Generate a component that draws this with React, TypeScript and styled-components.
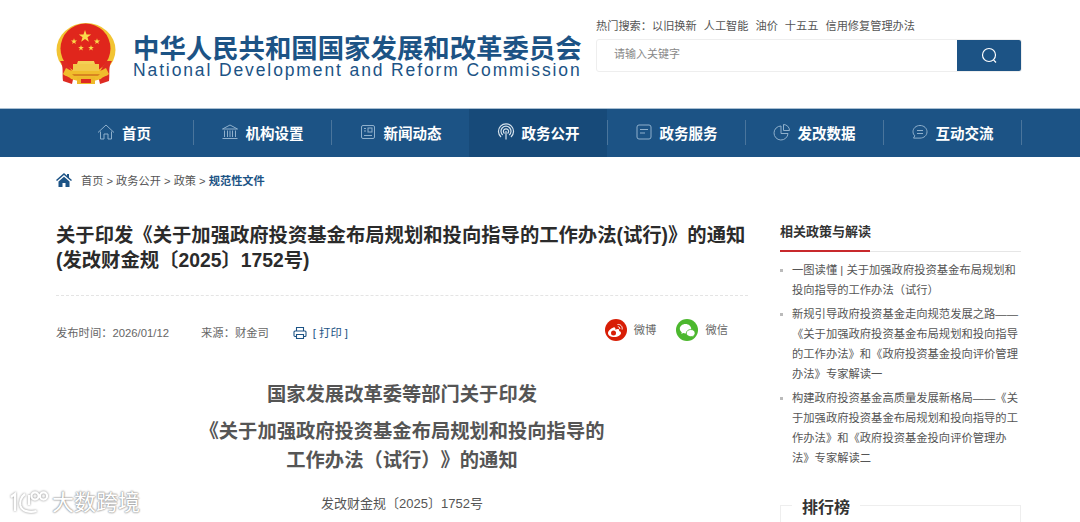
import styled, { createGlobalStyle } from "styled-components";
import type { ReactNode } from "react";

const FONT = `"Liberation Sans", "Noto Sans CJK SC", sans-serif`;
const BLUE = "#1c5385";

const Global = createGlobalStyle`
  html, body {
    margin: 0;
    background: #fff;
    height: 522px;
    overflow: hidden;
  }
  body {
    font-family: ${FONT};
    text-spacing-trim: space-all;
  }
  * { box-sizing: border-box; }
`;

const Page = styled.div`
  position: relative;
  width: 1080px;
  height: 522px;
  overflow: hidden;
`;

const Header = styled.header`
  height: 108px;
  padding: 17px 58px 0 56px;
  display: flex;
  justify-content: space-between;
`;

const Brand = styled.div`
  display: flex;
  align-items: flex-start;
  padding-top: 6px;
`;

const BrandText = styled.div`
  margin-left: 17px;
  padding-top: 13px;
  width: 450px;
  color: ${BLUE};
`;

const BrandCn = styled.div`
  font-size: 26.4px;
  line-height: 26px;
  font-weight: 700;
  white-space: nowrap;
`;

const BrandEn = styled.div`
  font-size: 17.5px;
  line-height: 16px;
  letter-spacing: 1.88px;
  white-space: nowrap;
`;

const SearchArea = styled.div`
  width: 426px;
`;

const HotWords = styled.div`
  display: flex;
  gap: 7px;
  font-size: 11.2px;
  line-height: 18px;
  color: #555;
`;

const SearchBox = styled.div`
  margin-top: 4px;
  height: 33px;
  display: flex;
  border: 1px solid #eee;
  border-radius: 3px;
  overflow: hidden;
`;

const SearchInput = styled.div`
  flex: 1;
  padding-left: 17px;
  font-size: 11px;
  line-height: 29px;
  color: #888;
`;

const SearchButton = styled.div`
  width: 64px;
  background: ${BLUE};
  display: flex;
  align-items: center;
  justify-content: center;
`;

const Nav = styled.nav`
  height: 49px;
  padding-left: 55px;
  display: flex;
  background: ${BLUE};
  border-top: 1px solid #a9bfd2;
`;

const NavItem = styled.div<{ $active?: boolean }>`
  position: relative;
  width: 138px;
  padding-bottom: 2px;
  display: flex;
  align-items: center;
  justify-content: center;
  gap: 7px;
  font-size: 14.5px;
  font-weight: 700;
  color: #fff;
  background: ${(p) => (p.$active ? "#174a79" : "transparent")};
  &::after {
    content: "";
    position: absolute;
    right: -1px;
    top: 11px;
    bottom: 12px;
    width: 1px;
    background: #4a759c;
  }
`;

const Crumbs = styled.div`
  height: 49px;
  padding: 16px 0 0 56px;
  display: flex;
  align-items: flex-start;
  font-size: 11.2px;
  line-height: 16px;
  color: #555;
  white-space: pre;
`;

const CrumbCurrent = styled.span`
  color: ${BLUE};
  font-weight: 700;
`;

const HomeIcon = styled.span`
  margin-right: 9px;
  display: flex;
`;

const Main = styled.main`
  padding: 0 59px 0 56px;
  display: flex;
  justify-content: space-between;
`;

const Article = styled.article`
  width: 692px;
`;

const Title = styled.h1`
  margin: 17px 0 0;
  height: 73px;
  font-size: 19.33px;
  line-height: 25px;
  font-weight: 700;
  color: #2b2b2b;
  border-bottom: 1px dashed #e4e4e4;
  white-space: nowrap;
`;

const Meta = styled.div`
  height: 84px;
  padding-top: 23px;
  display: flex;
  align-items: flex-start;
  font-size: 11.3px;
  line-height: 28px;
  color: #666;
`;

const MetaSource = styled.span`
  margin-left: 32px;
`;

const PrintLink = styled.span`
  margin-left: 24px;
  display: flex;
  align-items: center;
  gap: 6px;
  color: ${BLUE};
  height: 28px;
`;

const Share = styled.div`
  margin-left: auto;
  margin-right: 20px;
  margin-top: -3px;
  display: flex;
  gap: 20px;
`;

const ShareItem = styled.div`
  display: flex;
  align-items: center;
  gap: 7px;
  height: 28px;
`;

const Round = styled.span<{ $bg: string }>`
  width: 22px;
  height: 22px;
  border-radius: 50%;
  background: ${(p) => p.$bg};
  display: flex;
  align-items: center;
  justify-content: center;
`;

const DocHead = styled.h2`
  margin: 0;
  text-align: center;
  font-size: 19.3px;
  line-height: 29px;
  font-weight: 700;
  color: #555;
`;

const DocHeadGap = styled.div`
  height: 8px;
`;

const DocNo = styled.div`
  margin-top: 19px;
  text-align: center;
  font-size: 13px;
  line-height: 20px;
  color: #555;
`;

const Aside = styled.aside`
  width: 241px;
  padding-top: 17px;
`;

const AsideHead = styled.div`
  height: 29px;
  border-bottom: 1px solid #e6e6e6;
  position: relative;
  font-size: 13px;
  line-height: 18px;
  font-weight: 700;
  color: #333;
  &::after {
    content: "";
    position: absolute;
    left: 0;
    bottom: -1px;
    width: 90px;
    height: 2px;
    background: #c8292c;
  }
`;

const LinkList = styled.ul`
  list-style: none;
  margin: 8px 0 0;
  padding: 0;
`;

const LinkItem = styled.li`
  position: relative;
  padding-left: 12px;
  margin-bottom: 4px;
  font-size: 11.3px;
  line-height: 20px;
  color: #555;
  &::before {
    content: "";
    position: absolute;
    left: 0;
    top: 9px;
    width: 3px;
    height: 3px;
    background: #bbb;
  }
`;

const RankBox = styled.div`
  position: relative;
  margin-top: 37px;
  height: 40px;
  border: 1px solid #eee;
`;

const RankTitle = styled.div`
  position: absolute;
  left: 11px;
  top: -9px;
  padding: 0 10px;
  background: #fff;
  font-size: 16px;
  line-height: 22px;
  font-weight: 700;
  color: #333;
`;

const Watermark = styled.div`
  position: absolute;
  left: 9px;
  top: 488px;
  display: flex;
  align-items: flex-start;
  gap: 2px;
`;

const WatermarkLogo = styled.svg`
  filter: drop-shadow(0 0 1px #888);
`;

const WatermarkText = styled.span`
  font-size: 22px;
  line-height: 30px;
  color: #fff;
  text-shadow: 0 0 2px #999, 0 0 2px #999, 0 0 1px #aaa;
`;

const navIcon = (children: ReactNode) => (
  <svg width="18" height="18" viewBox="0 0 18 18" fill="none" stroke="#8fb0cc" strokeWidth="1">
    {children}
  </svg>
);

const navItems: { label: string; icon: ReactNode; active?: boolean }[] = [
  {
    label: "首页",
    icon: navIcon(
      <>
        <path d="M1 9.500 9 2l8 7.500" />
        <path d="M3.500 8.500V16h3.500v-5h4v5h3.500V8.500" />
      </>
    ),
  },
  {
    label: "机构设置",
    icon: navIcon(
      <>
        <path d="M1.500 6 9 2l7.500 4Z" />
        <path d="M3.500 7.500V14M6.500 7.500V14M9 7.500V14M11.500 7.500V14M14.500 7.500V14" />
        <path d="M1.500 15.500h15" />
      </>
    ),
  },
  {
    label: "新闻动态",
    icon: navIcon(
      <>
        <rect x="2.500" y="2.500" width="13" height="13" rx="1.500" />
        <rect x="9" y="5" width="4" height="4" />
        <path d="M5 5.500h2M5 8h2M5 12.500h8" />
      </>
    ),
  },
  {
    label: "政务公开",
    active: true,
    icon: (
      <svg width="18" height="18" viewBox="0 0 18 18" fill="none" stroke="#d6e2ec" strokeWidth="1.200">
        <path d="M4 14a7.500 7.500 0 1 1 10 0" />
        <path d="M5.800 12a5 5 0 1 1 6.400 0" />
        <path d="M7.500 10.500a2.600 2.600 0 1 1 3 0" />
        <path d="M9 8v8.500" />
      </svg>
    ),
  },
  {
    label: "政务服务",
    icon: navIcon(
      <>
        <rect x="2" y="2" width="14" height="14" rx="2" />
        <path d="M5 6.500h8M5 10h5" />
      </>
    ),
  },
  {
    label: "发改数据",
    icon: navIcon(
      <>
        <path d="M8 3a7 7 0 1 0 7 7.500H8Z" />
        <path d="M10.500 1.500a6 6 0 0 1 6 6h-6Z" />
      </>
    ),
  },
  {
    label: "互动交流",
    icon: navIcon(
      <>
        <path d="M9 2.500c4 0 7 2.700 7 6.300s-3 6.300-7 6.300H2.500l1.300-2.300C2.700 11.700 2 10.300 2 8.800 2 5.200 5 2.500 9 2.500Z" />
        <path d="M6 7.500h6M6 10.500h6" />
      </>
    ),
  },
];

const starPoints = (cx: number, cy: number, r: number) =>
  Array.from({ length: 10 }, (_, i) => {
    const radius = i % 2 ? r * 0.4 : r;
    const angle = (i * Math.PI) / 5 - Math.PI / 2;
    return `${cx + radius * Math.cos(angle)},${cy + radius * Math.sin(angle)}`;
  }).join(" ");

const Emblem = () => (
  <svg width="60" height="64" viewBox="0 0 60 64">
    <ellipse cx="30" cy="27" rx="29.500" ry="27" fill="#f2c433" />
    <circle cx="29.500" cy="25.500" r="25" fill="#e0261c" />
    <g fill="#fbd94a">
      <polygon points={starPoints(29, 13.500, 6.500)} />
      <polygon points={starPoints(18, 18.500, 3.200)} />
      <polygon points={starPoints(41, 18.500, 3.200)} />
      <polygon points={starPoints(25, 25, 3)} />
      <polygon points={starPoints(35, 25, 3)} />
    </g>
    <path d="M4 38c4 5 2 13 3 20l9 3 2-9-8-14ZM56 38c-4 5-2 13-3 20l-9 3-2-9 8-14Z" fill="#de2a22" />
    <path d="M22 38h16l1 3H21Z" fill="#f4cf56" />
    <path d="M17 41h26v7H17Z" fill="#f2c84a" />
    <path d="M10 45c3 1 4 3 8 3h24c4 0 5-2 8-3l3 6c-3 3-6 2-8 5-3 1-6 2-15 2s-12-1-15-2c-2-3-5-2-8-5Z" fill="#f0bd2c" />
    <path d="M16 51h28l-2 2H18Z" fill="#d8861f" />
    <path d="M21 54h18v7H21Z" fill="#eeb92a" />
    <path d="M25 56h10v4H25Z" fill="#de2a22" />
  </svg>
);

const WeiboIcon = () => (
  <svg width="17" height="15" viewBox="0 0 17 15" fill="none">
    <path d="M6.500 4.500C3.500 5.500 1 8 1 10.200c0 2.300 3 3.800 6.200 3.800 4 0 6.800-2.200 6.800-4 0-1.300-1.200-1.800-2-2 .4-1 .3-1.900-1-2-1 0-2 .4-2.600.7.300-1.500-.6-2.800-1.900-2.200Z" fill="#fff" />
    <circle cx="6.500" cy="10" r="2.500" fill="#d81e06" />
    <path d="M10.500 1.500c2.800-.5 5.300 1.800 4.600 5M10.800 3.800c1.300-.2 2.300.8 2 2.200" stroke="#fff" strokeWidth="1" />
  </svg>
);

const WechatIcon = () => (
  <svg width="17" height="15" viewBox="0 0 17 15">
    <path d="M6.500 1C3.200 1 .8 3.200.8 5.800c0 1.500.8 2.700 2 3.600l-.5 1.600 1.900-1c.8.300 1.500.4 2.300.4 3.300 0 5.700-2.100 5.700-4.600S9.800 1 6.500 1Z" fill="#fff" />
    <path d="M11.800 6.500c-2.500 0-4.500 1.600-4.500 3.600s2 3.600 4.500 3.600c.6 0 1.100-.1 1.600-.3l1.500.8-.4-1.300c1-.7 1.600-1.700 1.600-2.800 0-2-1.800-3.600-4.300-3.600Z" fill="#fff" stroke="#4cb82e" strokeWidth=".8" />
  </svg>
);

const PrintIcon = () => (
  <svg width="14" height="14" viewBox="0 0 14 14" fill="none" stroke={BLUE} strokeWidth="1.100">
    <path d="M3.500 5V1.500h7V5" />
    <rect x="1" y="5" width="12" height="5.500" rx="1" />
    <path d="M3.500 8.500h7v4h-7Z" fill="#fff" />
  </svg>
);

export default function App() {
  return (
    <Page>
      <Global />
      <Header>
        <Brand>
          <Emblem />
          <BrandText>
            <BrandCn>中华人民共和国国家发展和改革委员会</BrandCn>
            <BrandEn>National Development and Reform Commission</BrandEn>
          </BrandText>
        </Brand>
        <SearchArea>
          <HotWords>
            <span>热门搜索：以旧换新</span>
            <span>人工智能</span>
            <span>油价</span>
            <span>十五五</span>
            <span>信用修复管理办法</span>
          </HotWords>
          <SearchBox>
            <SearchInput>请输入关键字</SearchInput>
            <SearchButton>
              <svg width="17" height="17" viewBox="0 0 17 17" fill="none" stroke="#fff" strokeWidth="1.200">
                <circle cx="8" cy="8" r="6.500" />
                <path d="m12.500 12.800 2.500 2.700" />
              </svg>
            </SearchButton>
          </SearchBox>
        </SearchArea>
      </Header>

      <Nav>
        {navItems.map((item) => (
          <NavItem key={item.label} $active={item.active}>
            {item.icon}
            {item.label}
          </NavItem>
        ))}
      </Nav>

      <Crumbs>
        <HomeIcon>
          <svg width="16" height="14" viewBox="0 0 16 14" fill={BLUE}>
            <path d="M8 0 0 7l1 1 7-6 7 6 1-1-3-2.600V1h-2v1.700Z" />
            <path d="M2.500 8.500 8 3.700l5.500 4.800V14H9.500v-4h-3v4h-4Z" />
          </svg>
        </HomeIcon>
        首页 &gt; 政务公开 &gt; 政策 &gt; <CrumbCurrent>规范性文件</CrumbCurrent>
      </Crumbs>

      <Main>
        <Article>
          <Title>
            关于印发《关于加强政府投资基金布局规划和投向指导的工作办法(试行)》的通知
            <br />
            (发改财金规〔2025〕1752号)
          </Title>
          <Meta>
            <span>发布时间：2026/01/12</span>
            <MetaSource>来源：财金司</MetaSource>
            <PrintLink>
              <PrintIcon />[ 打印 ]
            </PrintLink>
            <Share>
              <ShareItem>
                <Round $bg="#d81e06">
                  <WeiboIcon />
                </Round>
                微博
              </ShareItem>
              <ShareItem>
                <Round $bg="#4cb82e">
                  <WechatIcon />
                </Round>
                微信
              </ShareItem>
            </Share>
          </Meta>
          <DocHead>国家发展改革委等部门关于印发</DocHead>
          <DocHeadGap />
          <DocHead>
            《关于加强政府投资基金布局规划和投向指导的
            <br />
            工作办法（试行）》的通知
          </DocHead>
          <DocNo>发改财金规〔2025〕1752号</DocNo>
        </Article>

        <Aside>
          <AsideHead>相关政策与解读</AsideHead>
          <LinkList>
            <LinkItem>一图读懂 | 关于加强政府投资基金布局规划和投向指导的工作办法（试行）</LinkItem>
            <LinkItem>
              新规引导政府投资基金走向规范发展之路——《关于加强政府投资基金布局规划和投向指导的工作办法》和《政府投资基金投向评价管理办法》专家解读一
            </LinkItem>
            <LinkItem>
              构建政府投资基金高质量发展新格局——《关于加强政府投资基金布局规划和投向指导的工作办法》和《政府投资基金投向评价管理办法》专家解读二
            </LinkItem>
          </LinkList>
          <RankBox>
            <RankTitle>排行榜</RankTitle>
          </RankBox>
        </Aside>
      </Main>

      <Watermark>
        <WatermarkLogo width="41" height="27" viewBox="0 0 41 27" fill="none" stroke="#fff" strokeWidth="2.200">
          <path d="M2 9 6 6v17" />
          <path d="M16 6c-4 3-5.500 8-4.500 12 1.500 5 9 7 16 5" />
          <path d="M20 7v10" />
          <circle cx="26" cy="8" r="3.600" />
          <circle cx="34.500" cy="8" r="3.600" />
        </WatermarkLogo>
        <WatermarkText>大数跨境</WatermarkText>
      </Watermark>
    </Page>
  );
}
